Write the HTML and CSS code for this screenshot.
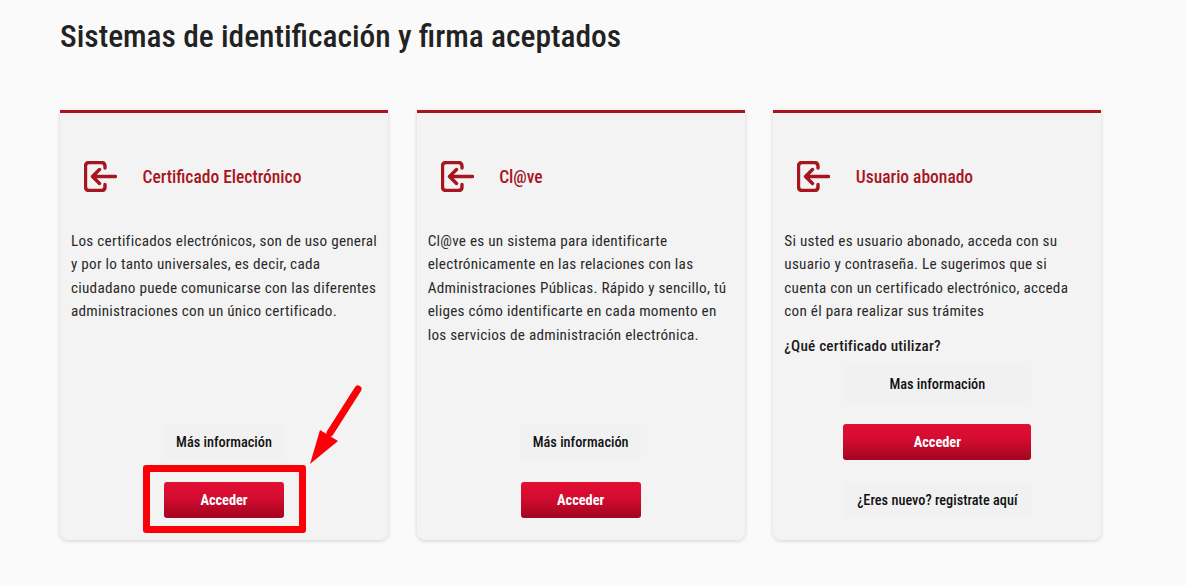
FILE: index.html
```html
<!DOCTYPE html>
<html lang="es">
<head>
<meta charset="utf-8">
<title>Sistemas de identificación y firma aceptados</title>
<link rel="stylesheet" href="styles.css">
</head>
<body>
<main class="page">
  <h1 class="title">Sistemas de identificación y firma aceptados</h1>
  <div class="cards">
    <section class="card">
      <header class="card-head">
        <svg class="icon" viewBox="0 0 33 31"><path d="M21 7V5Q21 1.500 17.500 1.500H5Q1.500 1.500 1.500 5V26Q1.500 29.500 5 29.500H17.500Q21 29.500 21 26V23.500" /><path d="M31.500 15.500H9M15.500 8.500 8.500 15.500 15.500 22.500" /></svg>
        <h2>Certificado Electrónico</h2>
      </header>
      <p class="text">Los certificados electrónicos, son de uso general<br>y por lo tanto universales, es decir, cada<br>ciudadano puede comunicarse con las diferentes<br>administraciones con un único certificado.</p>
      <div class="actions">
        <a class="btn">Más información</a>
        <a class="btn primary">Acceder</a>
      </div>
    </section>
    <section class="card">
      <header class="card-head">
        <svg class="icon" viewBox="0 0 33 31"><path d="M21 7V5Q21 1.500 17.500 1.500H5Q1.500 1.500 1.500 5V26Q1.500 29.500 5 29.500H17.500Q21 29.500 21 26V23.500" /><path d="M31.500 15.500H9M15.500 8.500 8.500 15.500 15.500 22.500" /></svg>
        <h2>Cl@ve</h2>
      </header>
      <p class="text">Cl@ve es un sistema para identificarte<br>electrónicamente en las relaciones con las<br>Administraciones Públicas. Rápido y sencillo, tú<br>eliges cómo identificarte en cada momento en<br>los servicios de administración electrónica.</p>
      <div class="actions">
        <a class="btn">Más información</a>
        <a class="btn primary">Acceder</a>
      </div>
    </section>
    <section class="card">
      <header class="card-head">
        <svg class="icon" viewBox="0 0 33 31"><path d="M21 7V5Q21 1.500 17.500 1.500H5Q1.500 1.500 1.500 5V26Q1.500 29.500 5 29.500H17.500Q21 29.500 21 26V23.500" /><path d="M31.500 15.500H9M15.500 8.500 8.500 15.500 15.500 22.500" /></svg>
        <h2>Usuario abonado</h2>
      </header>
      <p class="text">Si usted es usuario abonado, acceda con su<br>usuario y contraseña. Le sugerimos que si<br>cuenta con un certificado electrónico, acceda<br>con él para realizar sus trámites</p>
      <p class="question">¿Qué certificado utilizar?</p>
      <div class="actions wide">
        <a class="btn">Mas información</a>
        <a class="btn primary">Acceder</a>
        <a class="btn">¿Eres nuevo? registrate aquí</a>
      </div>
    </section>
  </div>
</main>
<div class="mark-box"></div>
<svg class="mark-arrow" viewBox="0 0 60 90"><path d="M48 6 20 50" /><path class="head" d="M0 81 10 47 28 58Z" /></svg>
</body>
</html>
```
FILE: styles.css
```css
* { box-sizing: border-box; }
html, body { margin: 0; height: 100%; overflow: hidden; }
body {
  background: #fafafa;
  color: #1a1a1a;
  font-family: "Roboto", "Liberation Sans", sans-serif;
  font-stretch: 75%;
}
.page { padding: 0 85px 0 60px; }
.title {
  margin: 0;
  padding-top: 18px;
  height: 110px;
  font-size: 31.500px;
  line-height: 38px;
  font-weight: 500;
  color: #222;
}
.cards {
  display: grid;
  grid-template-columns: 328px 328px 328px;
  column-gap: 28.670px;
}
.card {
  height: 430px;
  background: #f3f3f3;
  border-top: 3px solid #a7161f;
  border-radius: 0 0 8px 8px;
  box-shadow: 0 1px 4px rgba(0, 0, 0, 0.16);
  padding: 0 11px 22px;
  display: flex;
  flex-direction: column;
}
.card-head {
  display: flex;
  align-items: center;
  height: 48px;
  margin-top: 39px;
  padding-left: 13px;
}
.icon {
  width: 33px;
  height: 31px;
  fill: none;
  stroke: #a7161f;
  stroke-width: 3.400;
  stroke-linecap: round;
  stroke-linejoin: round;
  flex: none;
}
.card-head h2 {
  margin: 1px 0 0 25.500px;
  font-size: 17.500px;
  font-weight: 500;
  color: #a7161f;
}
.text {
  margin: 30px 0 0;
  font-size: 15.200px;
  letter-spacing: 0.250px;
  line-height: 23.450px;
  color: #2a2a2a;
  white-space: nowrap;
}
.question {
  margin: 10px 0 0;
  font-size: 15.200px;
  letter-spacing: 0.200px;
  line-height: 24px;
  font-weight: 500;
  color: #1a1a1a;
}
.actions {
  margin-top: auto;
  display: flex;
  flex-direction: column;
  align-items: center;
  gap: 22px;
}
.btn {
  display: flex;
  align-items: center;
  justify-content: center;
  width: 120px;
  height: 36px;
  background: #f1f1f1;
  border-radius: 3px;
  color: #111;
  font-size: 14.300px;
  font-weight: 500;
  white-space: nowrap;
}
.wide .btn { width: 188px; }
.primary {
  color: #fff;
  background: linear-gradient(#e30e34 0%, #d20c30 45%, #a20420 100%);
  font-weight: 700;
}
.mark-box {
  position: absolute;
  left: 143px;
  top: 465px;
  width: 163px;
  height: 68px;
  border: 7px solid #fb0007;
  border-radius: 3px;
}
.mark-arrow {
  position: absolute;
  left: 310px;
  top: 383px;
  width: 60px;
  height: 90px;
  overflow: visible;
}
.mark-arrow path { stroke: #fb0007; stroke-width: 7; stroke-linecap: round; fill: none; }
.mark-arrow .head { fill: #fb0007; stroke: none; }
```
